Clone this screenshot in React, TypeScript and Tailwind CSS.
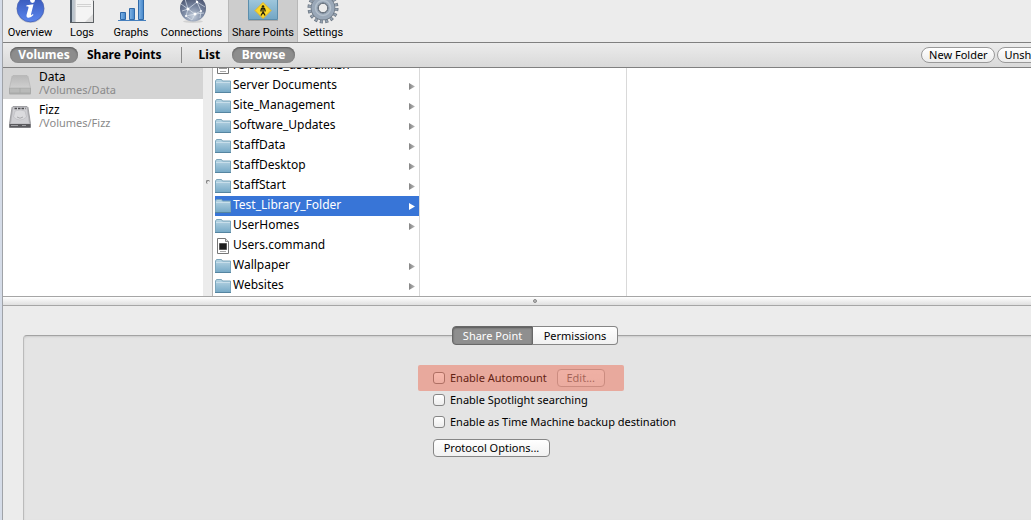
import { useState } from "react";

const toolbarItems = [
  { name: "Overview", width: "w-[54px]", icon: <OverviewIcon /> },
  { name: "Logs", width: "w-[50px]", icon: <LogsIcon /> },
  { name: "Graphs", width: "w-12", icon: <GraphsIcon /> },
  { name: "Connections", width: "w-[73px]", icon: <ConnectionsIcon /> },
  { name: "Share Points", width: "w-[70px]", icon: <SharePointsIcon />, active: true },
  { name: "Settings", width: "w-[50px]", icon: <SettingsIcon /> },
];

const volumes = [
  { name: "Data", path: "/Volumes/Data", icon: <SharedDriveIcon />, active: true },
  { name: "Fizz", path: "/Volumes/Fizz", icon: <DriveIcon /> },
];

const files = [
  { name: "re-create_userdir.ksh", kind: "script" },
  { name: "Server Documents", kind: "folder" },
  { name: "Site_Management", kind: "folder" },
  { name: "Software_Updates", kind: "folder" },
  { name: "StaffData", kind: "folder" },
  { name: "StaffDesktop", kind: "folder" },
  { name: "StaffStart", kind: "folder" },
  { name: "Test_Library_Folder", kind: "folder" },
  { name: "UserHomes", kind: "folder" },
  { name: "Users.command", kind: "command" },
  { name: "Wallpaper", kind: "folder" },
  { name: "Websites", kind: "folder" },
];

function OverviewIcon() {
  return (
    <svg width="32" height="32" viewBox="0 0 32 32">
      <defs>
        <linearGradient id="info" x1="0" y1="0" x2="0" y2="1">
          <stop offset="0" stopColor="#3554b5" />
          <stop offset="1" stopColor="#5b86ee" />
        </linearGradient>
      </defs>
      <circle cx="16.5" cy="17" r="14" fill="#c3c5cb" />
      <circle cx="16.5" cy="16.500" r="13.400" fill="url(#info)" stroke="#4561b8" strokeWidth="0.8" />
      <circle cx="18.500" cy="8.500" r="2.400" fill="#fff" />
      <path d="M12.500 13.200 19.500 12.300 17 22.300q-.2 1 .5.800l1.500-1 .4.900q-2.700 3-5.200 2.700-2.200-.5-1.600-3l1.900-7q.1-1-.6-1.100l-1.500-.2Z" fill="#fff" />
    </svg>
  );
}

function LogsIcon() {
  return (
    <svg width="32" height="32" viewBox="0 0 32 32">
      <path d="M4.500 0h17l6 9v21.500h-23Z" fill="#f4f4f4" stroke="#a5a5a5" />
      <path d="M4 0h2v31H4Z" fill="#4d5a68" />
      <path d="M6 0h2.500v30H6Z" fill="#bac4cd" />
      <path d="M9 0v30" stroke="#8e969e" strokeWidth="0.600" />
      <path d="M27.500 9v22M4 30.500h24" stroke="#5c6063" />
      <path d="M19 30 27 22v8Z" fill="#dcdcdc" />
      <path d="M11 12.500h14M11 14.500h14" stroke="#d2d2d2" />
    </svg>
  );
}

function GraphsIcon() {
  return (
    <svg width="32" height="32" viewBox="0 0 32 32">
      <defs>
        <linearGradient id="bar">
          <stop offset="0" stopColor="#80b4e6" />
          <stop offset="1" stopColor="#4586c9" />
        </linearGradient>
      </defs>
      <path d="M3 28.500h28" stroke="#4780bd" />
      <g fill="url(#bar)" stroke="#2f69a8">
        <path d="M5.500 20.500h5v7h-5Z" />
        <path d="M14.500 16.500h5v11h-5Z" />
        <path d="M23.500 4.500h5v23h-5Z" />
      </g>
    </svg>
  );
}

function ConnectionsIcon() {
  return (
    <svg width="32" height="32" viewBox="0 0 32 32">
      <defs>
        <radialGradient id="globe" cx="0.5" cy="0.8" r="0.75">
          <stop offset="0" stopColor="#c3cddb" />
          <stop offset="0.5" stopColor="#7b89a3" />
          <stop offset="1" stopColor="#4a546f" />
        </radialGradient>
      </defs>
      <ellipse cx="17" cy="29.500" rx="10" ry="1.500" fill="#d2d2d2" />
      <circle cx="17" cy="16.500" r="13" fill="url(#globe)" />
      <path d="M5 12 12 17 21 10 29 15M12 17 10 24 19 22 28 21M21 10 25 19 19 22 12 17M10 24 16 28 19 22M6 19 12 17M21 10 18 4M25 19 24 26M12 17 9 7" fill="none" stroke="#dce4ee" strokeWidth="0.7" />
      <g fill="#fff">
        <circle cx="12" cy="17" r="1.500" />
        <circle cx="21" cy="10" r="1.200" />
        <circle cx="19" cy="22" r="1.500" />
        <circle cx="25" cy="19" r="1" />
        <circle cx="10" cy="24" r="1" />
      </g>
    </svg>
  );
}

function SharePointsIcon() {
  return (
    <svg width="32" height="32" viewBox="0 0 32 32">
      <defs>
        <linearGradient id="share" x1="0" y1="0" x2="0" y2="1">
          <stop offset="0" stopColor="#a6cce0" />
          <stop offset="1" stopColor="#72a6c4" />
        </linearGradient>
      </defs>
      <path d="M1.500 4.500V27.500h29V7.500h-17v-3Z" fill="url(#share)" stroke="#5c8eac" />
      <path d="M1 28.500h30" stroke="#aaa" />
      <path d="M16 10.500 24 18.500 16 26.500 8 18.500Z" fill="#fbd928" stroke="#e5b422" />
      <circle cx="16" cy="14.500" r="1.300" fill="#28240c" />
      <path d="M16 16v4l-2 3.500M16 19.500l2 4M13.800 19.500 14.500 16.500h3l.8 3" fill="none" stroke="#28240c" strokeWidth="1.300" />
    </svg>
  );
}

function SettingsIcon() {
  return (
    <svg width="32" height="32" viewBox="0 0 32 32">
      <circle cx="16" cy="16" r="13.500" fill="none" stroke="#68737f" strokeWidth="4" strokeDasharray="3 2.302" />
      <circle cx="16" cy="16" r="13" fill="none" stroke="#94a1b0" strokeWidth="3.500" strokeDasharray="1.900 3.205" strokeDashoffset="-0.500" />
      <circle cx="16" cy="16" r="8.500" fill="none" stroke="#68737f" strokeWidth="7.600" />
      <circle cx="16" cy="16" r="8.500" fill="none" stroke="#9aa8b8" strokeWidth="6.200" />
      <circle cx="16" cy="16" r="7.500" fill="none" stroke="#b4c0cc" strokeWidth="1.500" />
      <circle cx="16" cy="16" r="4.700" fill="#ececec" stroke="#606b77" />
    </svg>
  );
}

function SharedDriveIcon() {
  return (
    <svg width="24" height="24" viewBox="0 0 24 24">
      <defs>
        <linearGradient id="shared" x1="0" y1="0" x2="0" y2="1">
          <stop offset="0" stopColor="#b8b8b8" />
          <stop offset="1" stopColor="#cfcfcf" />
        </linearGradient>
      </defs>
      <path d="M4 4.500 5 3.500h14l1 1L22.500 16h-21Z" fill="url(#shared)" stroke="#b0b0b0" strokeWidth="0.600" />
      <path d="M1 16h22v5.500q0 1-1 1H2q-1 0-1-1Z" fill="#a9aaa9" />
      <path d="M2 16.500h9.500v4H2ZM12.500 16.500H22v4h-9.500Z" fill="#b9bab9" />
    </svg>
  );
}

function DriveIcon() {
  return (
    <svg width="24" height="24" viewBox="0 0 24 24">
      <path d="M4 2.500 5 1.500h14l1 1 2.500 16v4h-21v-4Z" fill="#b6b6ba" stroke="#88888c" strokeWidth="0.700" />
      <path d="M5.500 2.500h13l2.500 16H3Z" fill="#cfcfd3" />
      <path d="M6.500 3.500h11" stroke="#4c4c50" strokeWidth="1.500" strokeDasharray="2.500 1" />
      <path d="M7 6q5-2 10 0l1.500 6q-6.500 6-13 0Z" fill="#dbdbde" stroke="#b4b4b8" strokeWidth="0.500" />
      <path d="M9 12q3 2.500 6 0" fill="none" stroke="#9a9a9e" strokeWidth="0.800" />
      <path d="M1.500 19h21v3.500h-21Z" fill="#5a5a5e" />
      <path d="M3 20.500h7M14 20.500h4" stroke="#a0a0a4" />
    </svg>
  );
}

function FolderIcon() {
  return (
    <svg width="16" height="16" viewBox="0 0 16 16">
      <defs>
        <linearGradient id="folder" x1="0" y1="0" x2="0" y2="1">
          <stop offset="0" stopColor="#b9d6e4" />
          <stop offset="1" stopColor="#76a9c6" />
        </linearGradient>
      </defs>
      <path d="M.5 14.500v-11.500l1-1.500h5l1 1.500h8v11.500Z" fill="url(#folder)" stroke="#7ba5bb" />
      <path d="M1 4.500h14" stroke="#c8deea" />
      <path d="M0 14.500h16" stroke="#5585a1" />
    </svg>
  );
}

function DocumentIcon({ kind }: { kind: string }) {
  return (
    <svg width="16" height="16" viewBox="0 0 16 16">
      <path d="M2.500.5h8l3 3v12h-11Z" fill="#fff" stroke="#777" />
      <path d="M10.500.5v3h3" fill="#ddd" stroke="#888" />
      {kind === "command" ? (
        <path d="M4.500 5.500h7v6h-7Z" fill="#1d1d1d" stroke="#555" />
      ) : (
        <path d="M4 6.500h8M4 8.500h8M4 10.500h8" stroke="#999" />
      )}
      <path d="M5 13.500h6" stroke="#aaa" />
    </svg>
  );
}

function Toolbar() {
  return (
    <div className="flex h-[43px] border-b border-[#808080] bg-[#ececec] font-[Roboto,sans-serif]">
      {toolbarItems.map((item) => (
        <button
          key={item.name}
          className={`${item.width} flex shrink-0 flex-col items-center text-[11px] leading-4 whitespace-nowrap ${
            item.active ? "border-x border-[#b8b8b8] bg-[#cdcdcd]" : ""
          }`}
        >
          <span className="-mt-2 block h-[33px]">{item.icon}</span>
          {item.name}
        </button>
      ))}
    </div>
  );
}

const pill =
  "h-4 rounded-full bg-[#8d8d8d] text-center text-white shadow-[inset_0_1px_2px_#555]";
const capsule =
  "h-4 shrink-0 rounded-full border border-[#999] bg-linear-to-b from-white to-[#ececec] px-[6px] text-[11px] leading-[14px]";

function ScopeBar() {
  return (
    <div className="flex h-[25px] items-center border-b border-[#808080] bg-linear-to-b from-[#ececec] to-[#d9d9d9] px-[7px]">
      <div className="flex items-center text-[12px] leading-4 font-bold">
        <button className={`${pill} w-[68px]`}>Volumes</button>
        <button className="px-[9px]">Share Points</button>
        <span className="mr-[17px] ml-[10px] h-4 w-px bg-[#888]" />
        <button className="mr-3">List</button>
        <button className={`${pill} w-[63px]`}>Browse</button>
      </div>
      <div className="mr-[5px] ml-auto flex gap-[2px]">
        <button className={`${capsule} w-[74px]`}>New Folder</button>
        <button className={capsule}>Unshare</button>
      </div>
    </div>
  );
}

function VolumeList() {
  return (
    <ul className="flex w-[200px] shrink-0 flex-col gap-[2px] bg-white">
      {volumes.map((volume) => (
        <li
          key={volume.name}
          className={`flex h-[31px] items-center gap-[7px] pl-[5px] ${volume.active ? "bg-[#d4d4d4]" : ""}`}
        >
          {volume.icon}
          <div className="pb-[2px]">
            <p className="text-[12px] leading-[14px]">{volume.name}</p>
            <p className="text-[11px] leading-3 text-[#8a8a8a]">{volume.path}</p>
          </div>
        </li>
      ))}
    </ul>
  );
}

function FileColumn() {
  const [selected, setSelected] = useState("Test_Library_Folder");

  return (
    <div className="flex w-[207px] shrink-0 flex-col justify-end overflow-hidden border-r border-[#d9d9d9] pl-[2px]">
      {files.map((file) => {
        const active = file.name === selected;
        return (
          <button
            key={file.name}
            onClick={() => setSelected(file.name)}
            className={`flex h-5 w-full shrink-0 items-center gap-[2px] pr-1 text-left text-[12px] leading-[18px] ${
              active ? "bg-[#3875d7] text-white" : ""
            }`}
          >
            {file.kind === "folder" ? <FolderIcon /> : <DocumentIcon kind={file.kind} />}
            <span className="h-5 grow">{file.name}</span>
            {file.kind === "folder" && (
              <svg width="6" height="8" viewBox="0 0 6 8">
                <defs>
                  <linearGradient id="arrow">
                    <stop offset="0" stopColor="#858585" />
                    <stop offset="1" stopColor="#b8b8b8" />
                  </linearGradient>
                </defs>
                <path d="M0 1 6 4.500 0 8Z" fill={active ? "#fff" : "url(#arrow)"} />
              </svg>
            )}
          </button>
        );
      })}
    </div>
  );
}

function Browser() {
  return (
    <div className="flex h-[229px] shrink-0 border-b border-[#a6a6a6] bg-white">
      <VolumeList />
      <div className="flex w-[10px] shrink-0 items-center justify-center border-r border-[#b5b5b5] bg-[#ececec]">
        <span className="size-1 rounded-full border-t border-l border-[#777]" />
      </div>
      <FileColumn />
      <div className="w-[207px] shrink-0 border-r border-[#d9d9d9]" />
    </div>
  );
}

const checkbox =
  "size-3 appearance-none rounded-[3px] border border-[#868686] bg-linear-to-b from-white to-[#ededed] checked:bg-[#3875d7]";
const pushButton =
  "h-[18px] rounded-[4px] border border-[#868686] bg-linear-to-b from-white to-[#f1f1f1] leading-4";

function SharePointForm() {
  return (
    <div className="mt-5 ml-[394px] flex flex-col items-start text-[11px] leading-4">
      <div className="relative flex h-[26px] w-[206px] items-center pl-[15px]">
        <label className="flex items-center gap-[5px]">
          <input type="checkbox" className={checkbox} />
          Enable Automount
        </label>
        <button disabled className={`${pushButton} ml-[10px] w-12 opacity-50`}>
          Edit...
        </button>
        <div className="pointer-events-none absolute inset-0 rounded-[2px] bg-[#ee5032]/40" />
      </div>
      <label className="ml-[15px] flex h-[18px] items-center gap-[5px]">
        <input type="checkbox" className={checkbox} />
        Enable Spotlight searching
      </label>
      <label className="mt-1 ml-[15px] flex h-[18px] items-center gap-[5px]">
        <input type="checkbox" className={checkbox} />
        Enable as Time Machine backup destination
      </label>
      <button className={`${pushButton} mt-2 ml-[15px] w-[117px]`}>Protocol Options...</button>
    </div>
  );
}

function DetailPanel() {
  return (
    <div className="flex grow flex-col bg-[#ececec] px-5 pt-[29px]">
      <div className="grow rounded-t-[4px] border border-b-0 border-[#bbb] border-t-[#a3a3a3] bg-[#e4e4e4] shadow-[inset_0_1px_2px_#ccc]">
        <div className="-mt-[10px] flex justify-center text-[11px] leading-4">
          <button className="h-[19px] w-[81px] rounded-l-[4px] border border-[#686868] bg-[#8f8f8f] text-white shadow-[inset_0_1px_2px_#555]">
            Share Point
          </button>
          <button className="h-[19px] w-[85px] rounded-r-[4px] border border-l-0 border-[#868686] bg-linear-to-b from-white to-[#f1f1f1]">
            Permissions
          </button>
        </div>
        <SharePointForm />
      </div>
    </div>
  );
}

export default function App() {
  return (
    <div className="flex min-h-screen overflow-hidden bg-[#d5dce8] pl-[2px] font-['Lucida_Grande','Noto_Sans',sans-serif] text-black">
      {/* the window runs a little past the right edge of the screen */}
      <div className="-mr-9 flex min-w-0 grow flex-col border-l border-[#a0a3a8]">
        <Toolbar />
        <ScopeBar />
        <Browser />
        <div className="flex h-[9px] items-center justify-center border-b border-[#a6a6a6] bg-linear-to-b from-white to-[#e0e0e0]">
          <span className="size-1 rounded-full border border-[#888] bg-[#bbb]" />
        </div>
        <DetailPanel />
      </div>
    </div>
  );
}
